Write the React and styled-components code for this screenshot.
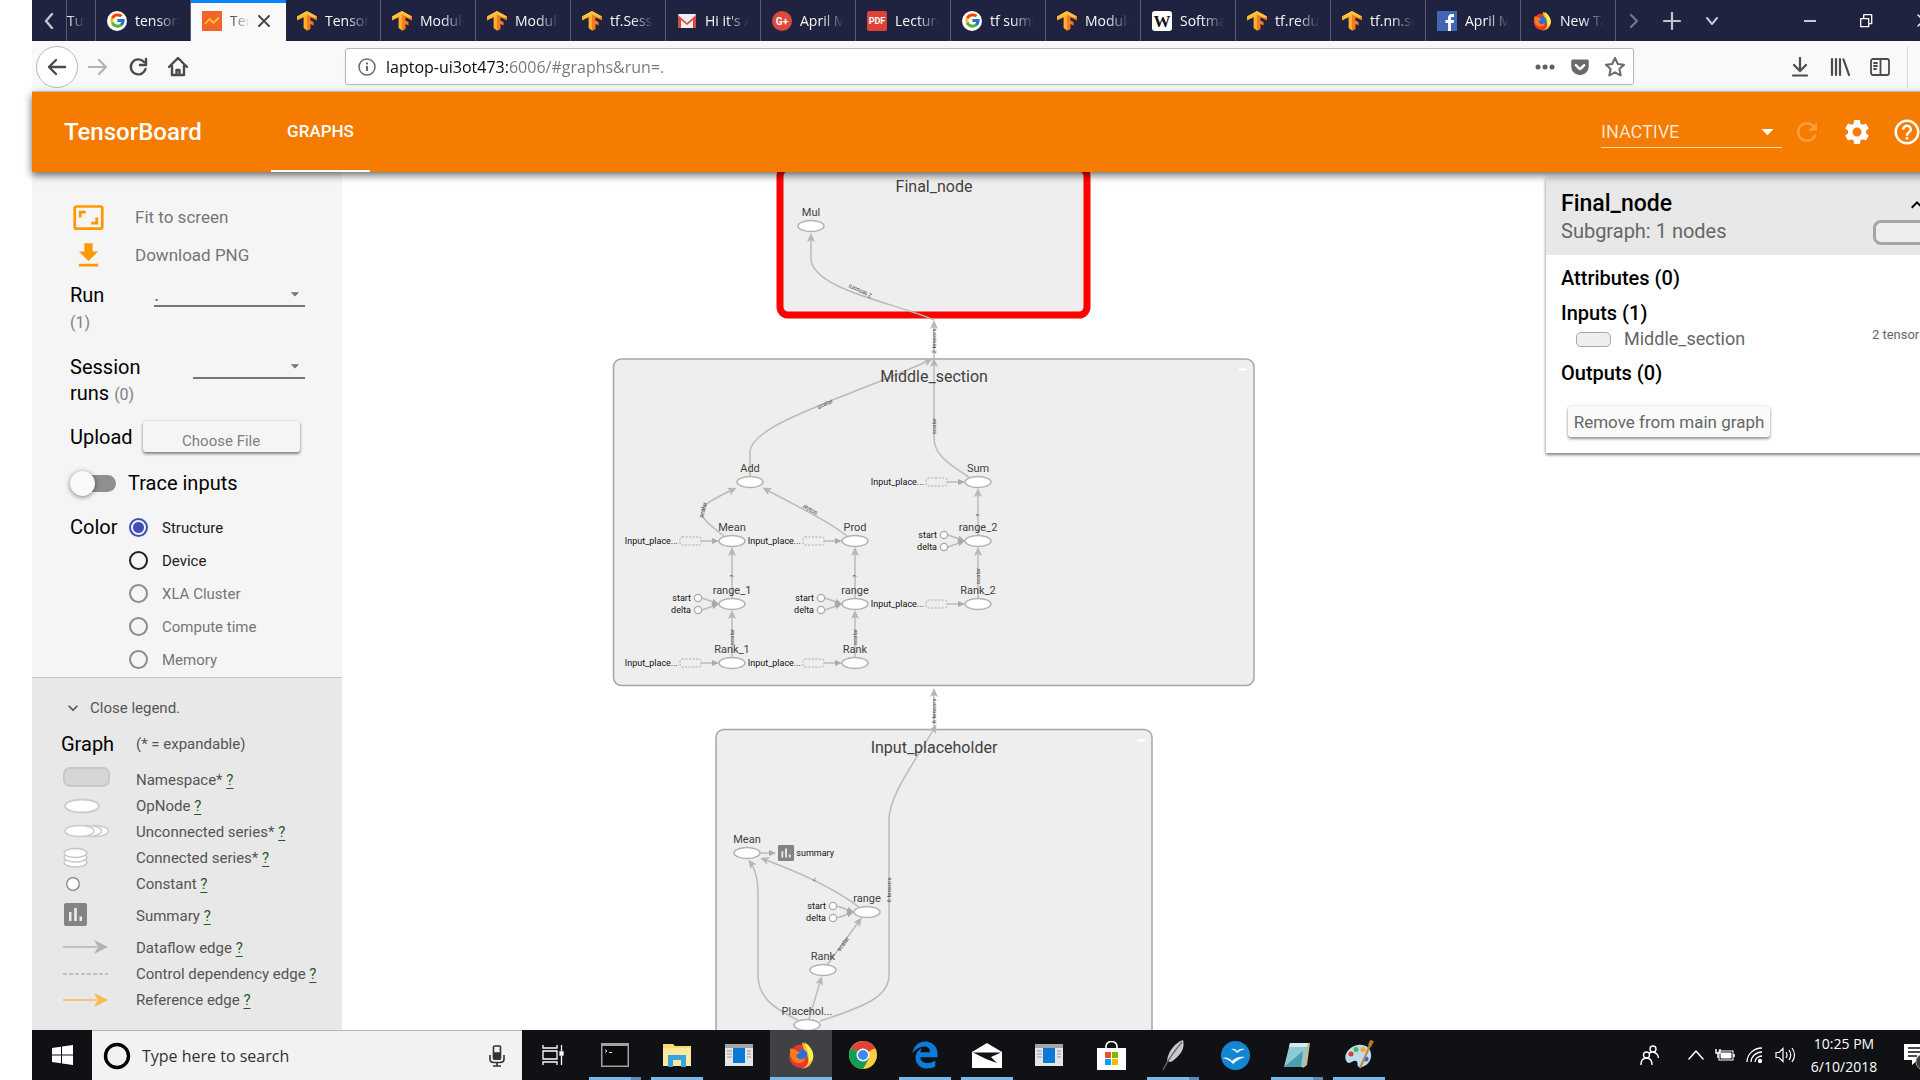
import React from "react";
import styled, { createGlobalStyle, css } from "styled-components";
import { MdAspectRatio, MdGetApp, MdSettings, MdRefresh, MdHelpOutline, MdExpandMore, MdExpandLess, MdArrowDropDown } from "react-icons/md";
import { FcGoogle } from "react-icons/fc";
import { FaEdgeLegacy, FaGetPocket } from "react-icons/fa";

const UI = `"Open Sans", "Noto Sans", sans-serif`;
const RB = `Roboto, "Liberation Sans", sans-serif`;

const Global = createGlobalStyle`
  * { box-sizing: border-box; }
  html, body { margin: 0; height: 100%; overflow: hidden; background: #fff; }
  body { font-family: ${RB}; }
  button, input, select { font-family: inherit; margin: 0; }
  button { border: 0; padding: 0; background: none; }
  svg { display: block; flex: none; }
`;

const Desktop = styled.div`
  width: 100vw;
  height: 100vh;
  margin-left: 32px;
  display: flex;
  flex-direction: column;
`;

/* ---------- browser tabs ---------- */
const TabStrip = styled.div`
  display: flex;
  height: 41px;
  flex: none;
  background: #202340;
  color: #f9f9fa;
  font-family: ${UI};
`;
const Tabs = styled.div`display: flex;`;
const StripButton = styled.button`
  width: ${(p) => p.$w}px;
  display: flex;
  align-items: center;
  justify-content: center;
  color: ${(p) => (p.$dim ? "#75778a" : "#c3c4ce")};
`;
const Tab = styled.button`
  width: ${(p) => p.$w || 95}px;
  display: flex;
  align-items: center;
  gap: 8px;
  padding-left: ${(p) => (p.$w ? 0 : 11)}px;
  border-right: ${(p) => (p.$active ? 0 : 1)}px solid #5c5e76;
  border-left: ${(p) => (p.$w ? 1 : 0)}px solid #5c5e76;
  color: #f9f9fa;
  overflow: hidden;
  ${(p) => p.$active && css`
    background: #f9f9fa;
    color: #4a4a4f;
    border-top: 3px solid #0a84ff;
    padding-bottom: 3px;
  `}
`;
const TabTitle = styled.span`
  width: ${(p) => p.$w || 44}px;
  flex: none;
  overflow: hidden;
  white-space: nowrap;
  text-align: left;
  font-size: 14px;
  line-height: 24px;
  mask-image: linear-gradient(to right, #000 ${(p) => (p.$w ? 10 : 50)}%, transparent 100%);
`;
const Grow = styled.div`flex: 1;`;

const TfIcon = () => (
  <svg width="20" height="20" viewBox="0 0 20 20">
    <path fill="#ffb02e" d="M10 0 0 5.4v4l6.600-3.200V17l3.400 2.600z" />
    <path fill="#f57c1f" d="M10 0v20l3.500-2v-5l3 1.500V11l-3-1.600V6.200L20 9.400v-4z" />
    <path fill="#ffc23d" d="M10 0 0 5.400l2.800 1.500L10 3.400l7.200 3.500L20 5.400z" />
  </svg>
);
const BoardIcon = () => (
  <svg width="20" height="20" viewBox="0 0 20 20">
    <rect width="20" height="20" fill="#f2652a" />
    <path d="M3 13 7.500 8l4 4L17 6.500" fill="none" stroke="#ffc233" strokeWidth="1.800" />
  </svg>
);
const GmailIcon = () => (
  <svg width="20" height="20" viewBox="0 0 20 20">
    <rect x="1" y="3" width="18" height="14" rx="1" fill="#eceff1" />
    <path d="M1 17V4l9 8 9-8v13h-3V9l-6 5-6-5v8z" fill="#d84a3d" />
  </svg>
);
const BadgeIcon = ({ label, bg, fg = "#fff", r = 2, size = 9, font = "Roboto" }) => (
  <svg width="20" height="20" viewBox="0 0 20 20">
    <rect width="20" height="20" rx={r} fill={bg} />
    <text x="10" y={10 + size * 0.36} textAnchor="middle" fontFamily={font} fontWeight="700" fontSize={size} fill={fg}>{label}</text>
  </svg>
);
const FacebookIcon = () => (
  <svg width="20" height="20" viewBox="0 0 20 20">
    <rect width="20" height="20" fill="#4267b2" />
    <path d="M11 20v-8H8.500V9H11V7c0-2.700 1.500-4 4-4h2v3h-1.500c-1.200 0-1.500.5-1.500 1.400V9h3l-.5 3H14v8z" fill="#fff" />
  </svg>
);
const FirefoxIcon = ({ size = 20 }) => (
  <svg width={size} height={size} viewBox="0 0 24 24">
    <circle cx="12" cy="13" r="10" fill="#e8382d" />
    <path d="M13 1c4 2 9 6 9.500 12C22.500 19 18 24 12 23.500c5-1 7-5 6-9S13 6 13 1z" fill="#ffbd2f" />
    <path d="M15 1c5 3 8 8 7.500 13-1 3-2.500 4-4 5C20 13 17 7 15 1z" fill="#fff04b" />
    <circle cx="12.500" cy="12" r="5" fill="#2b6fd6" />
    <path d="M3 6c1.500 1 3 1 4.500 1.500L11 10l-3 2c0 4 5 5 8 2-1 6-9 7-12 1C3 12 2 9 3 6z" fill="#ff7a18" />
  </svg>
);

const tabs = [
  { t: "Tensor", i: <TfIcon /> }, { t: "Module", i: <TfIcon /> }, { t: "Module", i: <TfIcon /> },
  { t: "tf.Session", i: <TfIcon /> }, { t: "Hi it's A", i: <GmailIcon /> },
  { t: "April M", i: <BadgeIcon label="G+" bg="#db4a3f" r={10} size={10} /> },
  { t: "Lecture", i: <BadgeIcon label="PDF" bg="#db4437" size={9} /> },
  { t: "tf summ", i: <GoogleBadge /> }, { t: "Module", i: <TfIcon /> },
  { t: "Softma", i: <BadgeIcon label="W" bg="#fff" fg="#111" size={17} r={3} font="Liberation Serif" /> },
  { t: "tf.redu", i: <TfIcon /> }, { t: "tf.nn.so", i: <TfIcon /> },
  { t: "April M", i: <FacebookIcon /> }, { t: "New Ta", i: <FirefoxIcon /> },
];
const Round = styled.span`
  width: 20px;
  height: 20px;
  flex: none;
  border-radius: 50%;
  background: #fff;
  display: flex;
  align-items: center;
  justify-content: center;
`;
function GoogleBadge() {
  return <Round><FcGoogle size={17} /></Round>;
}
const Stroke = ({ d, w = 20, h = 20, sw = 2, vb, color = "currentColor", fill = "none", cap = "round" }) => (
  <svg width={w} height={h} viewBox={vb || `0 0 ${w} ${h}`} fill={fill} stroke={color} strokeWidth={sw} strokeLinecap={cap} strokeLinejoin="round">
    <path d={d} />
  </svg>
);

/* ---------- address bar ---------- */
const NavBar = styled.div`
  height: 51px;
  flex: none;
  display: flex;
  align-items: center;
  background: #f9f9fa;
  box-shadow: inset 0 -1px #d8d8da;
  color: #4a4a4f;
  font-family: ${UI};
`;
const NavGroup = styled.div`
  width: 313px;
  display: flex;
  align-items: center;
  padding-left: ${(p) => (p.$end ? 0 : 4)}px;
  justify-content: ${(p) => (p.$end ? "flex-end" : "flex-start")};
`;
const NavButton = styled.button`
  width: 40px;
  height: 42px;
  display: flex;
  align-items: center;
  justify-content: center;
  color: ${(p) => (p.$dim ? "#b4b4b8" : "#4a4a4f")};
  ${(p) => p.$ring && css`
    width: 42px;
    border: 1px solid #b8b8bb;
    border-radius: 50%;
    background: #fff;
  `}
`;
const NavRule = styled.div`
  width: 1px;
  height: 42px;
  margin: 0 4px 0 7px;
  background: #dcdcde;
`;
const UrlBox = styled.div`
  flex: 1;
  height: 37px;
  display: flex;
  align-items: center;
  gap: 10px;
  padding: 0 8px 0 12px;
  margin-right: 5px;
  background: #fff;
  border: 1px solid #b9b9bc;
  border-radius: 3px;
  color: #6a6a6e;
  box-shadow: 0 1px 3px rgba(0, 0, 0, 0.06);
`;
const UrlInput = styled.input`
  flex: 1;
  border: 0;
  outline: 0;
  padding: 0;
  font-size: 16px;
  line-height: 24px;
  color: transparent;
  background: linear-gradient(to right, #0c0c0d 122px, #77777b 122px);
  background-clip: text;
`;
const UrlActions = styled.div`
  display: flex;
  align-items: center;
  gap: 15px;
`;

/* ---------- TensorBoard header ---------- */
const Header = styled.header`
  height: 80px;
  flex: none;
  display: flex;
  align-items: center;
  padding: 0 30px 0 32px;
  background: #f57c00;
  color: #fff;
  position: relative;
  z-index: 3;
  box-shadow: 0 3px 8px rgba(0, 0, 0, 0.6);
`;
const Brand = styled.h1`
  margin: 0;
  width: 207px;
  font-size: 24px;
  font-weight: 500;
`;
const HeaderTab = styled.a`
  height: 80px;
  width: 99px;
  display: flex;
  align-items: center;
  justify-content: center;
  border-bottom: 2px solid #fff;
  color: #fff;
  font-size: 17px;
  font-weight: 500;
  text-decoration: none;
`;
const SelectWrap = styled.div`
  display: grid;
  align-items: center;
  width: ${(p) => p.$w}px;
  height: ${(p) => p.$h}px;
  border-bottom: ${(p) => p.$line};
  color: ${(p) => p.$c};
  > * { grid-area: 1 / 1; }
  > svg { justify-self: end; pointer-events: none; }
`;
const Select = styled.select`
  appearance: none;
  width: 100%;
  height: 100%;
  border: 0;
  padding: 0;
  background: transparent;
  color: inherit;
  font-size: ${(p) => p.$size || 20}px;
  opacity: ${(p) => p.$o || 1};
`;
const HeaderActions = styled.div`
  display: flex;
  align-items: center;
  gap: 20px;
  margin-left: 10px;
`;
const IconButton = styled.button`
  width: 30px;
  height: 30px;
  display: flex;
  align-items: center;
  justify-content: center;
  color: ${(p) => p.$c || "#fff"};
`;

/* ---------- main area ---------- */
const Main = styled.main`
  flex: 1;
  min-height: 0;
  display: flex;
  position: relative;
`;
const Sidebar = styled.aside`
  width: 310px;
  flex: none;
  display: flex;
  flex-direction: column;
  background: #f5f5f5;
`;
const Controls = styled.div`padding: 26px 37px 1px 38px;`;
const ToolButton = styled.button`
  width: 100%;
  height: 38px;
  display: grid;
  grid-template-columns: 36px 1fr;
  gap: 29px;
  align-items: center;
  justify-items: start;
  color: #757575;
  font-size: 17px;
  > svg { color: #ff9800; justify-self: center; }
`;
const Field = styled.div`
  display: flex;
  justify-content: space-between;
  margin-top: ${(p) => p.$mt}px;
`;
const FieldLabel = styled.label`
  font-size: 20px;
  line-height: 26px;
  color: #000;
`;
const Count = styled.span`
  font-size: 16px;
  color: #808080;
`;
const UploadRow = styled.div`
  display: flex;
  align-items: center;
  gap: 10px;
  margin-top: 13px;
  height: 31px;
`;
const FileButton = styled.button`
  width: 157px;
  height: 31px;
  padding-top: 9px;
  border-radius: 3px;
  background: #f5f5f5;
  color: #808080;
  font-size: 15px;
  line-height: 22px;
  box-shadow: 0 2px 3px rgba(0, 0, 0, 0.45), 0 0 3px rgba(0, 0, 0, 0.12);
`;
const TraceRow = styled.div`
  display: flex;
  align-items: center;
  gap: 12px;
  margin-top: 15px;
  height: 32px;
`;
const Switch = styled.input`
  appearance: none;
  width: 46px;
  height: 17px;
  border-radius: 9px;
  background: linear-gradient(to right, transparent 8px, #8f8f8f 8px);
  display: flex;
  align-items: center;
  &::before {
    content: "";
    width: 25px;
    height: 25px;
    flex: none;
    border-radius: 50%;
    background: #fafafa;
    box-shadow: 0 1px 5px rgba(0, 0, 0, 0.5);
  }
`;
const ColorRow = styled.fieldset`
  margin: 12px 0 0;
  padding: 0;
  border: 0;
  display: flex;
  gap: 12px;
`;
const ColorName = styled.span`
  width: 47px;
  font-size: 20px;
  line-height: 33px;
`;
const RadioLabel = styled.label`
  height: 33px;
  display: flex;
  align-items: center;
  gap: 14px;
  font-size: 15px;
  color: ${(p) => (p.$off ? "#757575" : "#212121")};
`;
const Radio = styled.input`
  appearance: none;
  width: 19px;
  height: 19px;
  margin: 0;
  border-radius: 50%;
  border: 2px solid ${(p) => (p.checked ? "#3f51b5" : p.disabled ? "#8c8c8c" : "#212121")};
  background: ${(p) => (p.checked ? "radial-gradient(circle, #3f51b5 5px, transparent 6px)" : "none")};
`;
const Legend = styled.section`
  flex: 1;
  padding: 14px 0 0 29px;
  border-top: 1px solid #c4c4c4;
  background: #e8e8e8;
  color: #555;
  font-size: 15px;
`;
const CloseLegend = styled.button`
  height: 32px;
  display: flex;
  align-items: center;
  gap: 7px;
  padding-left: 2px;
  color: #555;
  font-size: 15px;
`;
const LegendRow = styled.div`
  display: grid;
  grid-template-columns: 75px 1fr;
  align-items: center;
  height: ${(p) => p.$h || 26}px;
  white-space: nowrap;
`;
const LegendHead = styled(LegendRow)`
  margin: 4px 0 8px;
  height: 31px;
`;
const LegendTitle = styled.h2`
  margin: 0;
  font-size: 20px;
  font-weight: 400;
  color: #000;
`;
const Help = styled.a`
  color: #1b5e20;
  text-decoration: underline;
  text-underline-offset: 3px;
`;

const SummaryGlyph = ({ x = 0, y = 0, s = 1 }) => (
  <g transform={`translate(${x} ${y}) scale(${s})`}>
    <rect width="23" height="23" rx="2" fill="#848484" />
    <path d="M5 9h2.500v9H5zM10.200 5h2.600v13h-2.600zM15.500 13.500H18V18h-2.500z" fill="#eee" />
  </g>
);

const glyphs = {
  ns: <rect x="3" y="1" width="45" height="18" rx="6" fill="#d6d6d6" stroke="#c8c8c8" strokeWidth="2" />,
  op: <ellipse cx="21" cy="13" rx="17" ry="6.500" fill="#fff" stroke="#ccc" strokeWidth="2" />,
  uns: (
    <g fill="#fff" stroke="#ccc" strokeWidth="1.600">
      <ellipse cx="33" cy="12" rx="14.500" ry="5.500" /><ellipse cx="26" cy="12" rx="14.500" ry="5.500" /><ellipse cx="18.500" cy="12" rx="14.500" ry="5.500" />
    </g>
  ),
  con: (
    <g fill="#fff" stroke="#c4c4c4" strokeWidth="1.300">
      <ellipse cx="14.500" cy="17.500" rx="11.500" ry="4.500" /><ellipse cx="14.500" cy="12.500" rx="11.500" ry="4.500" /><ellipse cx="14.500" cy="8" rx="11.500" ry="4.500" />
    </g>
  ),
  cst: <circle cx="12" cy="13" r="6.300" fill="#fff" stroke="#848484" strokeWidth="1.300" />,
  sum: <SummaryGlyph x={3} y={0} />,
  df: <g><path d="M2 12h34" stroke="#b2b2b2" strokeWidth="1.500" /><path d="M33 5l14 7-14 7 4-7z" fill="#b2b2b2" /></g>,
  ctl: <path d="M2 13h45" stroke="#b2b2b2" strokeWidth="1.500" strokeDasharray="4 2" />,
  ref: <g><path d="M2 13h34" stroke="#ffb74d" strokeWidth="1.500" /><path d="M33 6l14 7-14 7 4-7z" fill="#ffb74d" /></g>,
};
const legend = [
  ["ns", "Namespace*"], ["op", "OpNode"], ["uns", "Unconnected series*"], ["con", "Connected series*"], ["cst", "Constant"],
  ["sum", "Summary", 38], ["df", "Dataflow edge"], ["ctl", "Control dependency edge"], ["ref", "Reference edge"],
];
const radios = [["Structure"], ["Device"], ["XLA Cluster", true], ["Compute time", true], ["Memory", true]];

/* ---------- graph ---------- */
const Stage = styled.section`
  flex: 1;
  min-width: 0;
  overflow: hidden;
  background: #fff;
`;
const GraphSvg = styled.svg`
  width: 100%;
  height: 100%;
  font-family: ${RB};
  .title { font-size: 16px; fill: #414141; text-anchor: middle; }
  .name { font-size: 11px; fill: #414141; text-anchor: middle; }
  .note { font-size: 9px; fill: #111; text-anchor: end; }
  .edge { fill: none; stroke: #bbb; stroke-width: 1.500; }
  .label { font-size: 6px; fill: #444; text-anchor: middle; }
`;
const Node = ({ x, y, name }) => (
  <g>
    <ellipse cx={x} cy={y} rx="13" ry="5.500" fill="#fff" stroke="#b2b2b2" strokeWidth="1.500" />
    <text className="name" x={x} y={y - 10}>{name}</text>
  </g>
);
const InputNote = ({ x, y }) => (
  <g>
    <text className="note" x={x - 54} y={y + 3}>Input_place...</text>
    <rect x={x - 52} y={y - 4} width="21" height="8" rx="2" fill="none" stroke="#aaa" strokeDasharray="2 1.500" strokeWidth="1" />
    <path className="edge" d={`M${x - 31} ${y}H${x - 16}`} markerEnd="url(#small)" />
  </g>
);
const RangeNote = ({ x, y }) => (
  <g>
    {[["start", -6], ["delta", 6]].map(([t, d]) => (
      <g key={t}>
        <text className="note" x={x - 41} y={y + d + 3}>{t}</text>
        <circle cx={x - 34} cy={y + d} r="3.600" fill="#fff" stroke="#aaa" strokeWidth="1.300" />
        <path className="edge" d={`M${x - 30} ${y + d}L${x - 16} ${y + d / 6}`} markerEnd="url(#small)" />
      </g>
    ))}
  </g>
);
const Label = ({ x, y, a, children }) => (
  <text className="label" transform={`translate(${x} ${y}) rotate(${a})`} y="2">{children}</text>
);
const Edge = ({ d }) => <path className="edge" d={d} markerEnd="url(#big)" />;

function Graph() {
  return (
    <GraphSvg role="img" aria-label="Computation graph">
      <defs>
        <marker id="big" markerWidth="9" markerHeight="9" refX="6" refY="4" orient="auto" markerUnits="userSpaceOnUse">
          <path d="M0 0 9 4 0 8 2 4z" fill="#b7b7b7" />
        </marker>
        <marker id="small" markerWidth="7" markerHeight="6" refX="4" refY="3" orient="auto" markerUnits="userSpaceOnUse">
          <path d="M0 0 7 3 0 6z" fill="#aaa" />
        </marker>
      </defs>
      <g transform="translate(-342 -172)">
        <rect x="780" y="168" width="307" height="147" rx="8" fill="#eee" stroke="#f00" strokeWidth="7" />
        <rect x="613.500" y="359" width="640.500" height="326.500" rx="8" fill="#eee" stroke="#a6a6a6" strokeWidth="1.500" />
        <rect x="716" y="729.500" width="436" height="340" rx="8" fill="#eee" stroke="#a6a6a6" strokeWidth="1.500" />
        <path d="M1239 369.500h8M1137 740.500h8" stroke="#fff" strokeWidth="2" />

        <Edge d="M934 320C900 304 811 290 811 258V236" />
        <Edge d="M934 359V323" />
        <Edge d="M934 729V691" />
        <Edge d="M750 476V452C750 424 850 397 930 360" />
        <Edge d="M969 477C945 462 934 453 934 438V361" />
        <Edge d="M724 536C692 512 694 508 734 489" />
        <Edge d="M847 536C825 519 800 508 765 489" />
        <Edge d="M732 598V550" />
        <Edge d="M855 598V550" />
        <Edge d="M732 657V613" />
        <Edge d="M855 657V613" />
        <Edge d="M978 535V491" />
        <Edge d="M978 598V550" />
        <Edge d="M859 907C840 893 810 876 763 859" />
        <Edge d="M827 965 860 920" />
        <Edge d="M809 1019 821 979" />
        <Edge d="M798 1020C770 1007 758 995 758 975V895Q758 872 750 862" />
        <Edge d="M820 1021C870 1005 889 995 889 975V820C889 795 915 762 935 727" />
        <path className="edge" d="M760 853H773" markerEnd="url(#small)" />

        <Label x={860} y={291} a={204}>2 tensors</Label>
        <Label x={934} y={341} a={-90}>2 tensors</Label>
        <Label x={825} y={404} a={-24}>scalar</Label>
        <Label x={934} y={426} a={-90}>scalar</Label>
        <Label x={703} y={510} a={-75}>scalar</Label>
        <Label x={810} y={510} a={210}>scalar</Label>
        <Label x={732} y={576} a={-90}>?</Label>
        <Label x={855} y={576} a={-90}>?</Label>
        <Label x={978} y={515} a={-90}>?</Label>
        <Label x={732} y={637} a={-90}>scalar</Label>
        <Label x={855} y={637} a={-90}>scalar</Label>
        <Label x={978} y={576} a={-90}>scalar</Label>
        <Label x={934} y={711} a={-90}>6 tensors</Label>
        <Label x={889} y={890} a={-90}>6 tensors</Label>
        <Label x={815} y={879} a={205}>?</Label>
        <Label x={843} y={944} a={-54}>scalar</Label>

        <text className="title" x="934" y="192">Final_node</text>
        <text className="title" x="934" y="382">Middle_section</text>
        <text className="title" x="934" y="753">Input_placeholder</text>

        <Node x={811} y={226} name="Mul" />
        <Node x={750} y={482} name="Add" />
        <Node x={732} y={541} name="Mean" />
        <Node x={855} y={541} name="Prod" />
        <Node x={732} y={604} name="range_1" />
        <Node x={855} y={604} name="range" />
        <Node x={732} y={663} name="Rank_1" />
        <Node x={855} y={663} name="Rank" />
        <Node x={978} y={482} name="Sum" />
        <Node x={978} y={541} name="range_2" />
        <Node x={978} y={604} name="Rank_2" />
        <Node x={747} y={853} name="Mean" />
        <Node x={867} y={912} name="range" />
        <Node x={823} y={970} name="Rank" />
        <Node x={807} y={1025} name="Placehol..." />

        <InputNote x={732} y={541} />
        <InputNote x={855} y={541} />
        <InputNote x={732} y={663} />
        <InputNote x={855} y={663} />
        <InputNote x={978} y={482} />
        <InputNote x={978} y={604} />
        <RangeNote x={732} y={604} />
        <RangeNote x={855} y={604} />
        <RangeNote x={978} y={541} />
        <RangeNote x={867} y={912} />
        <SummaryGlyph x={778} y={845} s={0.7} />
        <text className="note" x="834" y="856">summary</text>
      </g>
    </GraphSvg>
  );
}

/* ---------- node info card ---------- */
const Card = styled.section`
  position: absolute;
  top: 6px;
  right: 20px;
  width: 386px;
  background: #fff;
  box-shadow: 0 2px 3px rgba(0, 0, 0, 0.45), 0 0 4px rgba(0, 0, 0, 0.15);
`;
const CardHead = styled.div`
  height: 77px;
  padding: 12px 0 0 15px;
  display: flex;
  justify-content: space-between;
  background: #e8e8e8;
`;
const CardTitle = styled.h2`
  margin: 0;
  font-size: 23px;
  line-height: 28px;
  font-weight: 500;
`;
const CardSub = styled.div`
  font-size: 20px;
  line-height: 26px;
  color: #666;
`;
const CardTools = styled.div`
  width: 59px;
  display: flex;
  flex-direction: column;
  align-items: flex-end;
`;
const Pill = styled.div`
  width: ${(p) => (p.$big ? 59 : 35)}px;
  height: ${(p) => (p.$big ? 25 : 15)}px;
  flex: none;
  border: ${(p) => (p.$big ? 3 : 1)}px solid #a6a6a6;
  border-radius: ${(p) => (p.$big ? 8 : 5)}px;
  background: #eee;
`;
const CardBody = styled.div`padding: 10px 0 16px 15px;`;
const CardHeading = styled.h3`
  margin: 0 0 ${(p) => p.$mb || 0}px;
  font-size: 20px;
  line-height: 26px;
  font-weight: 500;
`;
const CardItem = styled.div`
  height: 26px;
  margin-bottom: 8px;
  padding: 0 6px 0 15px;
  display: flex;
  align-items: center;
  gap: 13px;
  font-size: 18px;
  line-height: 24px;
  color: #666;
`;
const Size = styled.span`
  margin-left: auto;
  height: 26px;
  font-size: 13px;
  line-height: 18px;
`;
const RemoveButton = styled.button`
  width: 202px;
  height: 31px;
  margin: 20px 0 0 7px;
  border-radius: 3px;
  background: #fafafa;
  color: #666;
  font-size: 17px;
  box-shadow: 0 2px 3px rgba(0, 0, 0, 0.4), 0 0 3px rgba(0, 0, 0, 0.12);
`;

/* ---------- Windows taskbar ---------- */
const Taskbar = styled.footer`
  height: 50px;
  flex: none;
  display: flex;
  background: #101114;
  color: #fff;
  font-family: ${UI};
  position: relative;
  z-index: 3;
`;
const Task = styled.button`
  width: ${(p) => p.$w || 62}px;
  flex: none;
  display: flex;
  align-items: center;
  justify-content: center;
  color: #fff;
  background:
    ${(p) => p.$run ? `linear-gradient(to right, #76b9ed ${p.$run === 2 ? 42 : 62}px, #5d8bb4 0) center bottom / ${p.$on ? 62 : 52}px 3px no-repeat` : "none"}
    ${(p) => (p.$on ? ", #3f4144" : "")};
`;
const Search = styled.label`
  width: 430px;
  display: flex;
  align-items: center;
  gap: 11px;
  padding: 0 16px 0 11px;
  background: #f2f2f2;
  border-top: 1px solid #b5b5b5;
  color: #333;
`;
const SearchInput = styled.input`
  flex: 1;
  border: 0;
  outline: 0;
  padding: 0;
  background: transparent;
  font-size: 16px;
  &::placeholder { color: #333; opacity: 1; }
`;
const Tray = styled.div`
  margin-left: auto;
  display: flex;
  align-items: stretch;
`;
const TrayIcons = styled.div`
  display: flex;
  align-items: center;
  gap: 11px;
  margin-right: ${(p) => p.$mr}px;
`;
const Clock = styled.time`
  width: 76px;
  padding-top: 2px;
  text-align: center;
  font-size: 14px;
  line-height: 23px;
`;

const ConsoleIcon = () => (
  <svg width="28" height="24" viewBox="0 0 28 24"><rect width="28" height="24" fill="#9fa3a6" /><rect x="1.500" y="3" width="25" height="19.500" fill="#0a0a0a" /><path d="M4 6.500l2 1.500-2 1.500M8 9.500h3" stroke="#ddd" fill="none" /></svg>
);
const FolderIcon = () => (
  <svg width="28" height="24" viewBox="0 0 28 24"><path d="M0 1h10l2 2h16v20H0z" fill="#ffd766" /><path d="M0 5h28v18H0z" fill="#ffe9a2" /><path d="M5 12h18v12h-5v-7h-8v7H5z" fill="#35a7dc" /></svg>
);
const WindowIcon = () => (
  <svg width="28" height="22" viewBox="0 0 28 22"><rect width="28" height="22" fill="#e6e6e6" /><rect width="28" height="4" fill="#a5a5a5" /><rect x="8" y="4" width="12" height="15" fill="#0a78d6" /><path d="M2 7h5M2 10h5M2 13h5M22 7h4M22 10h4M22 13h4" stroke="#999" /></svg>
);
const ChromeIcon = () => (
  <svg width="28" height="28" viewBox="0 0 28 28"><circle cx="14" cy="14" r="14" fill="#ffcd40" /><path d="M14 14 1.900 7A14 14 0 0 1 26.100 7z" fill="#db4437" /><path d="M14 14 1.900 7A14 14 0 0 0 14 28l6-10.500z" fill="#0f9d58" /><path d="M14 7.500h12.300A14 14 0 0 0 14 0z" fill="#db4437" /><circle cx="14" cy="14" r="6.500" fill="#fff" /><circle cx="14" cy="14" r="5" fill="#4285f4" /></svg>
);
const MailIcon = () => (
  <svg width="30" height="25" viewBox="0 0 30 25"><path d="M0 9 15 0l15 9v16H0z" fill="#fff" /><path d="M1 9.500h28L19 14l6 6-11-4z" fill="#111" /></svg>
);
const StoreIcon = () => (
  <svg width="29" height="29" viewBox="0 0 29 29"><path d="M9 8V5a5.500 4.500 0 0 1 11 0v3" fill="none" stroke="#fff" strokeWidth="1.600" /><rect y="7" width="29" height="22" fill="#fff" /><path d="M8 11h6v6H8z" fill="#f25022" /><path d="M15 11h6v6h-6z" fill="#7fba00" /><path d="M8 18h6v6H8z" fill="#00a4ef" /><path d="M15 18h6v6h-6z" fill="#ffb900" /></svg>
);
const FeatherIcon = () => (
  <svg width="26" height="30" viewBox="0 0 26 30"><path d="M23 0c2 7-1 15-12 22l-4-1C8 11 15 3 23 0z" fill="#c9c9c9" /><path d="M22 2C16 9 9 18 3 30" fill="none" stroke="#666" strokeWidth="1.200" /></svg>
);
const OfficeIcon = () => (
  <svg width="29" height="29" viewBox="0 0 29 29"><circle cx="14.500" cy="14.500" r="14.500" fill="#1286d1" /><path d="M10 8q4-1 6 2 3-3 8-2-5 1-8 4-2-3-6-4zM1 17q6-2 10 3 5-5 13-4-7 2-12 7-4-5-11-6z" fill="#fff" /></svg>
);
const NotepadIcon = () => (
  <svg width="28" height="28" viewBox="0 0 28 28"><path d="M8 2h19l-3 22-4 3z" fill="#c9b98e" /><path d="M7 2h18l-5 24H1z" fill="#8cc9d4" /><path d="M7 2h18l-1 4H6z" fill="#dce9ec" /><path d="M1 26 20 10l-2 16z" fill="#4c9db0" /></svg>
);
const PaintIcon = () => (
  <svg width="30" height="30" viewBox="0 0 30 30"><path d="M14 5C22 4 28 9 27 17c-1 7-8 11-12 10-3-1 0-5-3-6s-6 4-9 1C-2 16 5 6 14 5z" fill="#b9dcf2" /><circle cx="7" cy="14" r="2.500" fill="#e2382f" /><circle cx="12" cy="9.500" r="2.500" fill="#53b848" /><circle cx="19" cy="9.500" r="2.500" fill="#f7a823" /><circle cx="22" cy="19" r="2.500" fill="#3c67c4" /><path d="M27 3 16 28" stroke="#c98438" strokeWidth="2" /><path d="M24 5l2-5 4 1-3 6z" fill="#b9772c" /></svg>
);
const TaskViewIcon = () => (
  <svg width="22" height="20" viewBox="0 0 22 20" fill="none" stroke="#fff" strokeWidth="1.300"><path d="M1 0v3h14V0M1 20v-3h14v3M1 6h14v8H1zM19.500 0v6M19.500 11v9" /><path d="M18 7h3v3h-3z" fill="#fff" /></svg>
);
const tasks = [
  ["Task view", <TaskViewIcon />], ["Command Prompt", <ConsoleIcon />, 2], ["File Explorer", <FolderIcon />, 1], ["App window", <WindowIcon />],
  ["Firefox", <FirefoxIcon size={28} />, 1, true], ["Chrome", <ChromeIcon />], ["Edge", <FaEdgeLegacy size={28} color="#0b7bdc" />, 1],
  ["Mail", <MailIcon />, 1], ["App window", <WindowIcon />], ["Store", <StoreIcon />], ["Feather", <FeatherIcon />, 2],
  ["OpenOffice", <OfficeIcon />], ["Notepad", <NotepadIcon />, 2], ["Paint", <PaintIcon />, 1],
];

export default function App() {
  return (
    <Desktop>
      <Global />
      <TabStrip>
        <StripButton $w={34} aria-label="Scroll tabs left"><Stroke d="M8 1 2 8l6 7" w={10} h={16} sw={2.400} /></StripButton>
        <Tabs>
          <Tab $w={30}><TabTitle $w={17}>Tub</TabTitle></Tab>
          <Tab><GoogleBadge /><TabTitle>tensorf</TabTitle></Tab>
          <Tab $active><BoardIcon /><TabTitle $w={20}>Ten</TabTitle><Stroke d="M1 1l10 10M11 1 1 11" w={12} h={12} /></Tab>
          {tabs.map((t, i) => <Tab key={i}>{t.i}<TabTitle>{t.t}</TabTitle></Tab>)}
        </Tabs>
        <StripButton $w={36} $dim aria-label="Scroll tabs right"><Stroke d="M2 2l6 6-6 6" w={10} h={16} sw={2.200} /></StripButton>
        <StripButton $w={40} aria-label="New tab"><Stroke d="M9 1v16M1 9h16" w={18} h={18} sw={2.200} /></StripButton>
        <StripButton $w={40} aria-label="All tabs"><Stroke d="M1 1l5 6 5-6" w={12} h={8} /></StripButton>
        <Grow />
        <StripButton $w={57} aria-label="Minimize"><Stroke d="M0 1h12" w={12} h={2} sw={1.500} color="#fff" cap="butt" /></StripButton>
        <StripButton $w={57} aria-label="Restore"><Stroke d="M.7 4.700h8v8h-8zM3.700 4.700v-4h8v9h-3" w={13} h={14} sw={1.300} color="#fff" /></StripButton>
        <StripButton $w={57} aria-label="Close"><Stroke d="M1 1l11 11M12 1 1 12" w={13} h={13} sw={1.300} color="#fff" /></StripButton>
      </TabStrip>

      <NavBar>
        <NavGroup>
          <NavButton $ring aria-label="Back"><Stroke d="M18 10H2M9 3l-7 7 7 7" sw={2.400} /></NavButton>
          <NavButton $dim aria-label="Forward"><Stroke d="M1 10h17M11 3l7 7-7 7" sw={2.200} /></NavButton>
          <NavButton aria-label="Reload"><Stroke d="M16 5A7.500 7.500 0 1 0 17.500 12M18 2v6h-6" sw={2.400} /></NavButton>
          <NavButton aria-label="Home"><Stroke d="M1 10l9-9 9 9M4 9v9h12V9M8.500 18v-5h3v5" sw={2.400} /></NavButton>
        </NavGroup>
        <UrlBox>
          <svg width="18" height="18" viewBox="0 0 18 18" fill="none" stroke="#6a6a6e" strokeWidth="1.500"><circle cx="9" cy="9" r="8" /><path d="M9 8v5M9 4.500v2" strokeWidth="2" /></svg>
          <UrlInput aria-label="Address" defaultValue="laptop-ui3ot473:6006/#graphs&run=." />
          <UrlActions>
            <svg width="20" height="6" viewBox="0 0 20 6" fill="#5f5f63"><circle cx="3" cy="3" r="2.500" /><circle cx="10" cy="3" r="2.500" /><circle cx="17" cy="3" r="2.500" /></svg>
            <FaGetPocket size={20} />
            <Stroke d="M10 1l2.800 6 6.200.7-4.600 4.300 1.300 6.500L10 15.300 4.300 18.500 5.600 12 1 7.700 7.200 7z" />
          </UrlActions>
        </UrlBox>
        <NavGroup $end>
          <NavButton aria-label="Downloads"><Stroke d="M8 1v13M2 8l6 6 6-6M1 18.500h14" w={16} sw={2.200} /></NavButton>
          <NavButton aria-label="Library"><Stroke d="M2 2v16M6 2v16M10 2v16M13.500 2.500 19 18" sw={2.200} /></NavButton>
          <NavButton aria-label="Sidebars"><Stroke d="M3 2h14a2 2 0 0 1 2 2v12a2 2 0 0 1-2 2H3a2 2 0 0 1-2-2V4a2 2 0 0 1 2-2zM10.500 2v16M4 6h3M4 9h3M4 12h2" sw={1.800} /></NavButton>
          <NavRule />
          <NavButton aria-label="Menu"><Stroke d="M1 3h18M1 10h18M1 17h18" /></NavButton>
        </NavGroup>
      </NavBar>

      <Header>
        <Brand>TensorBoard</Brand>
        <HeaderTab href="#graphs">GRAPHS</HeaderTab>
        <Grow />
        <SelectWrap $w={181} $h={32} $line="1px solid #ffd9b0" $c="#fff">
          <Select aria-label="Inactive dashboards" $size={18} $o={0.8}><option>INACTIVE</option></Select>
          <MdArrowDropDown size={29} />
        </SelectWrap>
        <HeaderActions>
          <IconButton $c="#ff9d40" aria-label="Reload data"><MdRefresh size={30} /></IconButton>
          <IconButton aria-label="Settings"><MdSettings size={30} /></IconButton>
          <IconButton aria-label="Help"><MdHelpOutline size={30} /></IconButton>
        </HeaderActions>
      </Header>

      <Main>
        <Sidebar>
          <Controls>
            <ToolButton><MdAspectRatio size={33} />Fit to screen</ToolButton>
            <ToolButton><MdGetApp size={33} />Download PNG</ToolButton>
            <Field $mt={8}>
              <FieldLabel htmlFor="run">Run<br /><Count>(1)</Count></FieldLabel>
              <SelectWrap $w={151} $h={25} $line="2px solid #757575" $c="#757575">
                <Select id="run"><option>.</option></Select>
                <MdArrowDropDown size={20} />
              </SelectWrap>
            </Field>
            <Field $mt={18}>
              <FieldLabel htmlFor="session">Session<br />runs <Count>(0)</Count></FieldLabel>
              <SelectWrap $w={112} $h={25} $line="2px solid #757575" $c="#757575">
                <Select id="session" />
                <MdArrowDropDown size={20} />
              </SelectWrap>
            </Field>
            <UploadRow>
              <FieldLabel htmlFor="upload">Upload</FieldLabel>
              <FileButton id="upload">Choose File</FileButton>
            </UploadRow>
            <TraceRow>
              <Switch type="checkbox" role="switch" id="trace" />
              <FieldLabel htmlFor="trace">Trace inputs</FieldLabel>
            </TraceRow>
            <ColorRow aria-label="Color">
              <ColorName>Color</ColorName>
              <div>
                {radios.map(([t, off], i) => (
                  <RadioLabel key={t} $off={off}>
                    <Radio type="radio" name="color" checked={i === 0} disabled={!!off} readOnly />
                    {t}
                  </RadioLabel>
                ))}
              </div>
            </ColorRow>
          </Controls>
          <Legend>
            <CloseLegend><MdExpandMore size={20} />Close legend.</CloseLegend>
            <LegendHead><LegendTitle>Graph</LegendTitle><span>(* = expandable)</span></LegendHead>
            {legend.map(([g, t, h]) => (
              <LegendRow key={g} $h={h}>
                <svg width="50" height="26" viewBox="0 0 50 26">{glyphs[g]}</svg>
                <span>{t} <Help href="#help">?</Help></span>
              </LegendRow>
            ))}
          </Legend>
        </Sidebar>
        <Stage><Graph /></Stage>
        <Card>
          <CardHead>
            <div>
              <CardTitle>Final_node</CardTitle>
              <CardSub>Subgraph: 1 nodes</CardSub>
            </div>
            <CardTools>
              <IconButton $c="#000" aria-label="Collapse"><MdExpandLess size={24} /></IconButton>
              <Pill $big />
            </CardTools>
          </CardHead>
          <CardBody>
            <CardHeading $mb={9}>Attributes (0)</CardHeading>
            <CardHeading>Inputs (1)</CardHeading>
            <CardItem><Pill />Middle_section<Size>2 tensors</Size></CardItem>
            <CardHeading>Outputs (0)</CardHeading>
            <RemoveButton>Remove from main graph</RemoveButton>
          </CardBody>
        </Card>
      </Main>

      <Taskbar>
        <Task $w={60} aria-label="Start">
          <svg width="21" height="20" viewBox="0 0 21 20" fill="#fff"><path d="M0 3l9-1.300v7.800H0zM10 1.500 21 0v9.500H10zM0 10.500h9v7.800L0 17zM10 10.500h11V20l-11-1.500z" /></svg>
        </Task>
        <Search>
          <svg width="28" height="28" viewBox="0 0 28 28"><circle cx="14" cy="14" r="11.500" fill="none" stroke="#000" strokeWidth="3.400" /></svg>
          <SearchInput placeholder="Type here to search" aria-label="Search" />
          <svg width="18" height="22" viewBox="0 0 18 22" fill="none" stroke="#333" strokeWidth="1.600"><rect x="5.500" y="1" width="7" height="13" rx="1" /><path d="M6 8h6v6H6z" fill="#333" /><path d="M2 10v4q0 3.500 4 3.500h6q4 0 4-3.500v-4M9 18v3M5 21h8" /></svg>
        </Search>
        {tasks.map(([n, icon, run, on], i) => <Task key={i} aria-label={n} $run={run} $on={on}>{icon}</Task>)}
        <Tray>
          <TrayIcons $mr={28}>
            <svg width="20" height="20" viewBox="0 0 20 20" fill="none" stroke="#fff" strokeWidth="1.400"><circle cx="13" cy="4" r="3" /><path d="M13 7q5 1 5.500 6" /><circle cx="6.500" cy="10" r="3" /><path d="M1 20q0-7 5.500-7t5.500 7M9 8l3-1" /></svg>
          </TrayIcons>
          <TrayIcons $mr={9}>
            <Stroke d="M1 9l7-8 7 8" w={16} h={10} sw={1.500} />
            <svg width="20" height="14" viewBox="0 0 20 14" fill="none" stroke="#fff"><rect x="4" y="3" width="14" height="9" /><path d="M6 5h10v5H6z" fill="#fff" /><path d="M19 6v3M1 1v4h4V1M3 5v5" strokeWidth="1.500" /></svg>
            <svg width="18" height="16" viewBox="0 0 18 16" fill="none" stroke="#fff" strokeWidth="1.300"><path d="M1 15A15 14 0 0 1 16 1M5 15A11 10 0 0 1 16 5M9 15a7 6 0 0 1 7-6" /><circle cx="14" cy="14" r="1.500" fill="#fff" /></svg>
            <svg width="22" height="16" viewBox="0 0 22 16" fill="none" stroke="#fff" strokeWidth="1.200"><path d="M1 5.500h3l4-4v13l-4-4H1zM11 5q2 3 0 6M14 3q3.500 5 0 10M17 1q5 7 0 14" /></svg>
          </TrayIcons>
          <Clock>10:25 PM<br />6/10/2018</Clock>
          <Task $w={70} aria-label="Notifications">
            <svg width="30" height="30" viewBox="0 0 30 30"><path d="M2 4h22v16h-8l-6 5v-5H2z" fill="#fff" /><path d="M6 8h14M6 12h14M6 16h9" stroke="#111" strokeWidth="1.500" /><circle cx="22" cy="22" r="8" fill="#3b3b3b" stroke="#999" /></svg>
          </Task>
        </Tray>
      </Taskbar>
    </Desktop>
  );
}
